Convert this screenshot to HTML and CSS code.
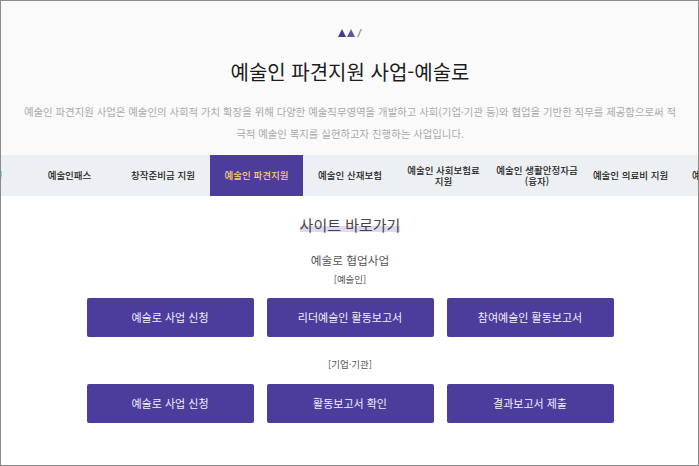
FILE: index.html
```html
<!DOCTYPE html>
<html lang="ko">
<head>
    <meta charset="UTF-8">
    <meta name="viewport" content="width=device-width, initial-scale=1.0">
    <title>예술인 파견지원 사업-예술로</title>
    <link rel="stylesheet" href="styles.css">
</head>
<body>
    <div class="page">
        <header class="intro">
            <svg class="mark" width="24" height="8" viewBox="0 0 24 8">
                <polygon points="0,8 4,0 8,8" fill="#453a8c"/>
                <polygon points="9,8 13,0 17,8" fill="#5a57a8"/>
                <polygon points="19,8 22.5,0 24,0 20.5,8" fill="#9c9cad"/>
            </svg>
            <h1>예술인 파견지원 사업-예술로</h1>
            <p>예술인 파견지원 사업은 예술인의 사회적 가치 확장을 위해 다양한 예술직무영역을 개발하고 사회(기업·기관 등)와 협업을 기반한 직무를 제공함으로써 적<br>극적 예술인 복지를 실현하고자 진행하는 사업입니다.</p>
        </header>

        <nav class="tabs">
            <a href="#">예술활동증명</a>
            <a href="#">예술인패스</a>
            <a href="#">창작준비금 지원</a>
            <a href="#" class="active">예술인 파견지원</a>
            <a href="#">예술인 산재보험</a>
            <a href="#">예술인 사회보험료<br>지원</a>
            <a href="#">예술인 생활안정자금<br>(융자)</a>
            <a href="#">예술인 의료비 지원</a>
            <a href="#">예술인 자녀돌봄</a>
        </nav>

        <section class="links">
            <h2><span>사이트 바로가기</span></h2>
            <h3>예술로 협업사업</h3>
            <p class="group first">[예술인]</p>
            <div class="btns">
                <a href="#">예술로 사업 신청</a>
                <a href="#">리더예술인 활동보고서</a>
                <a href="#">참여예술인 활동보고서</a>
            </div>
            <p class="group">[기업·기관]</p>
            <div class="btns">
                <a href="#">예술로 사업 신청</a>
                <a href="#">활동보고서 확인</a>
                <a href="#">결과보고서 제출</a>
            </div>
        </section>
    </div>
</body>
</html>
```

FILE: styles.css
```css
* { box-sizing: border-box; }
html, body { height: 100%; }
body {
    margin: 0;
    font-family: "Noto Sans CJK KR", "Noto Sans", sans-serif;
    background: white;
}
a { text-decoration: none; }
.page {
    height: 466px;
    border: 1px solid #8a8a8a;
    overflow: hidden;
}
.intro, .tabs, .links { padding-left: 1px; }
.intro {
    height: 154px;
    padding-top: 28px;
    background: #fafafa;
    text-align: center;
}
.mark { display: block; margin: 0 auto; }
.intro h1 {
    margin: 20px 0 0;
    font-size: 20px;
    line-height: 30px;
    font-weight: 400;
    color: #1c1c1c;
}
.intro p {
    margin: 14px 0 0;
    font-size: 10.4px;
    line-height: 22px;
    color: #aaa;
    white-space: nowrap;
}
.tabs {
    display: flex;
    justify-content: center;
    height: 41px;
    background: #edf0f3;
}
.tabs a {
    flex: 0 0 93.5px;
    display: flex;
    align-items: center;
    justify-content: center;
    text-align: center;
    font-size: 9.5px;
    line-height: 11px;
    font-weight: 500;
    color: #222;
    white-space: nowrap;
}
.tabs a.active {
    background: #4c3c9c;
    color: #fbcf6a;
}
.links { text-align: center; }
.links h2 {
    margin: 17px 0 0;
    font-size: 15px;
    line-height: 24px;
    font-weight: 400;
    color: #444;
}
.links h2 span {
    background: linear-gradient(transparent 55%, #dfd9f1 55%, #dfd9f1 85%, transparent 85%);
}
.links h3 {
    margin: 14px 0 0;
    font-size: 11.7px;
    line-height: 18px;
    font-weight: 400;
    color: #555;
}
.group {
    margin: 0;
    font-size: 9.5px;
    line-height: 14px;
    color: #555;
}
.group.first { margin-top: 3px; }
.btns {
    display: flex;
    justify-content: center;
    gap: 13px;
    margin: 13px 0 20px;
}
.group.first + .btns { margin-top: 12px; }
.btns a {
    flex: 0 0 167px;
    height: 39px;
    line-height: 39px;
    border-radius: 2px;
    background: #4c3c9c;
    color: #f1effa;
    font-size: 11px;
}
```
